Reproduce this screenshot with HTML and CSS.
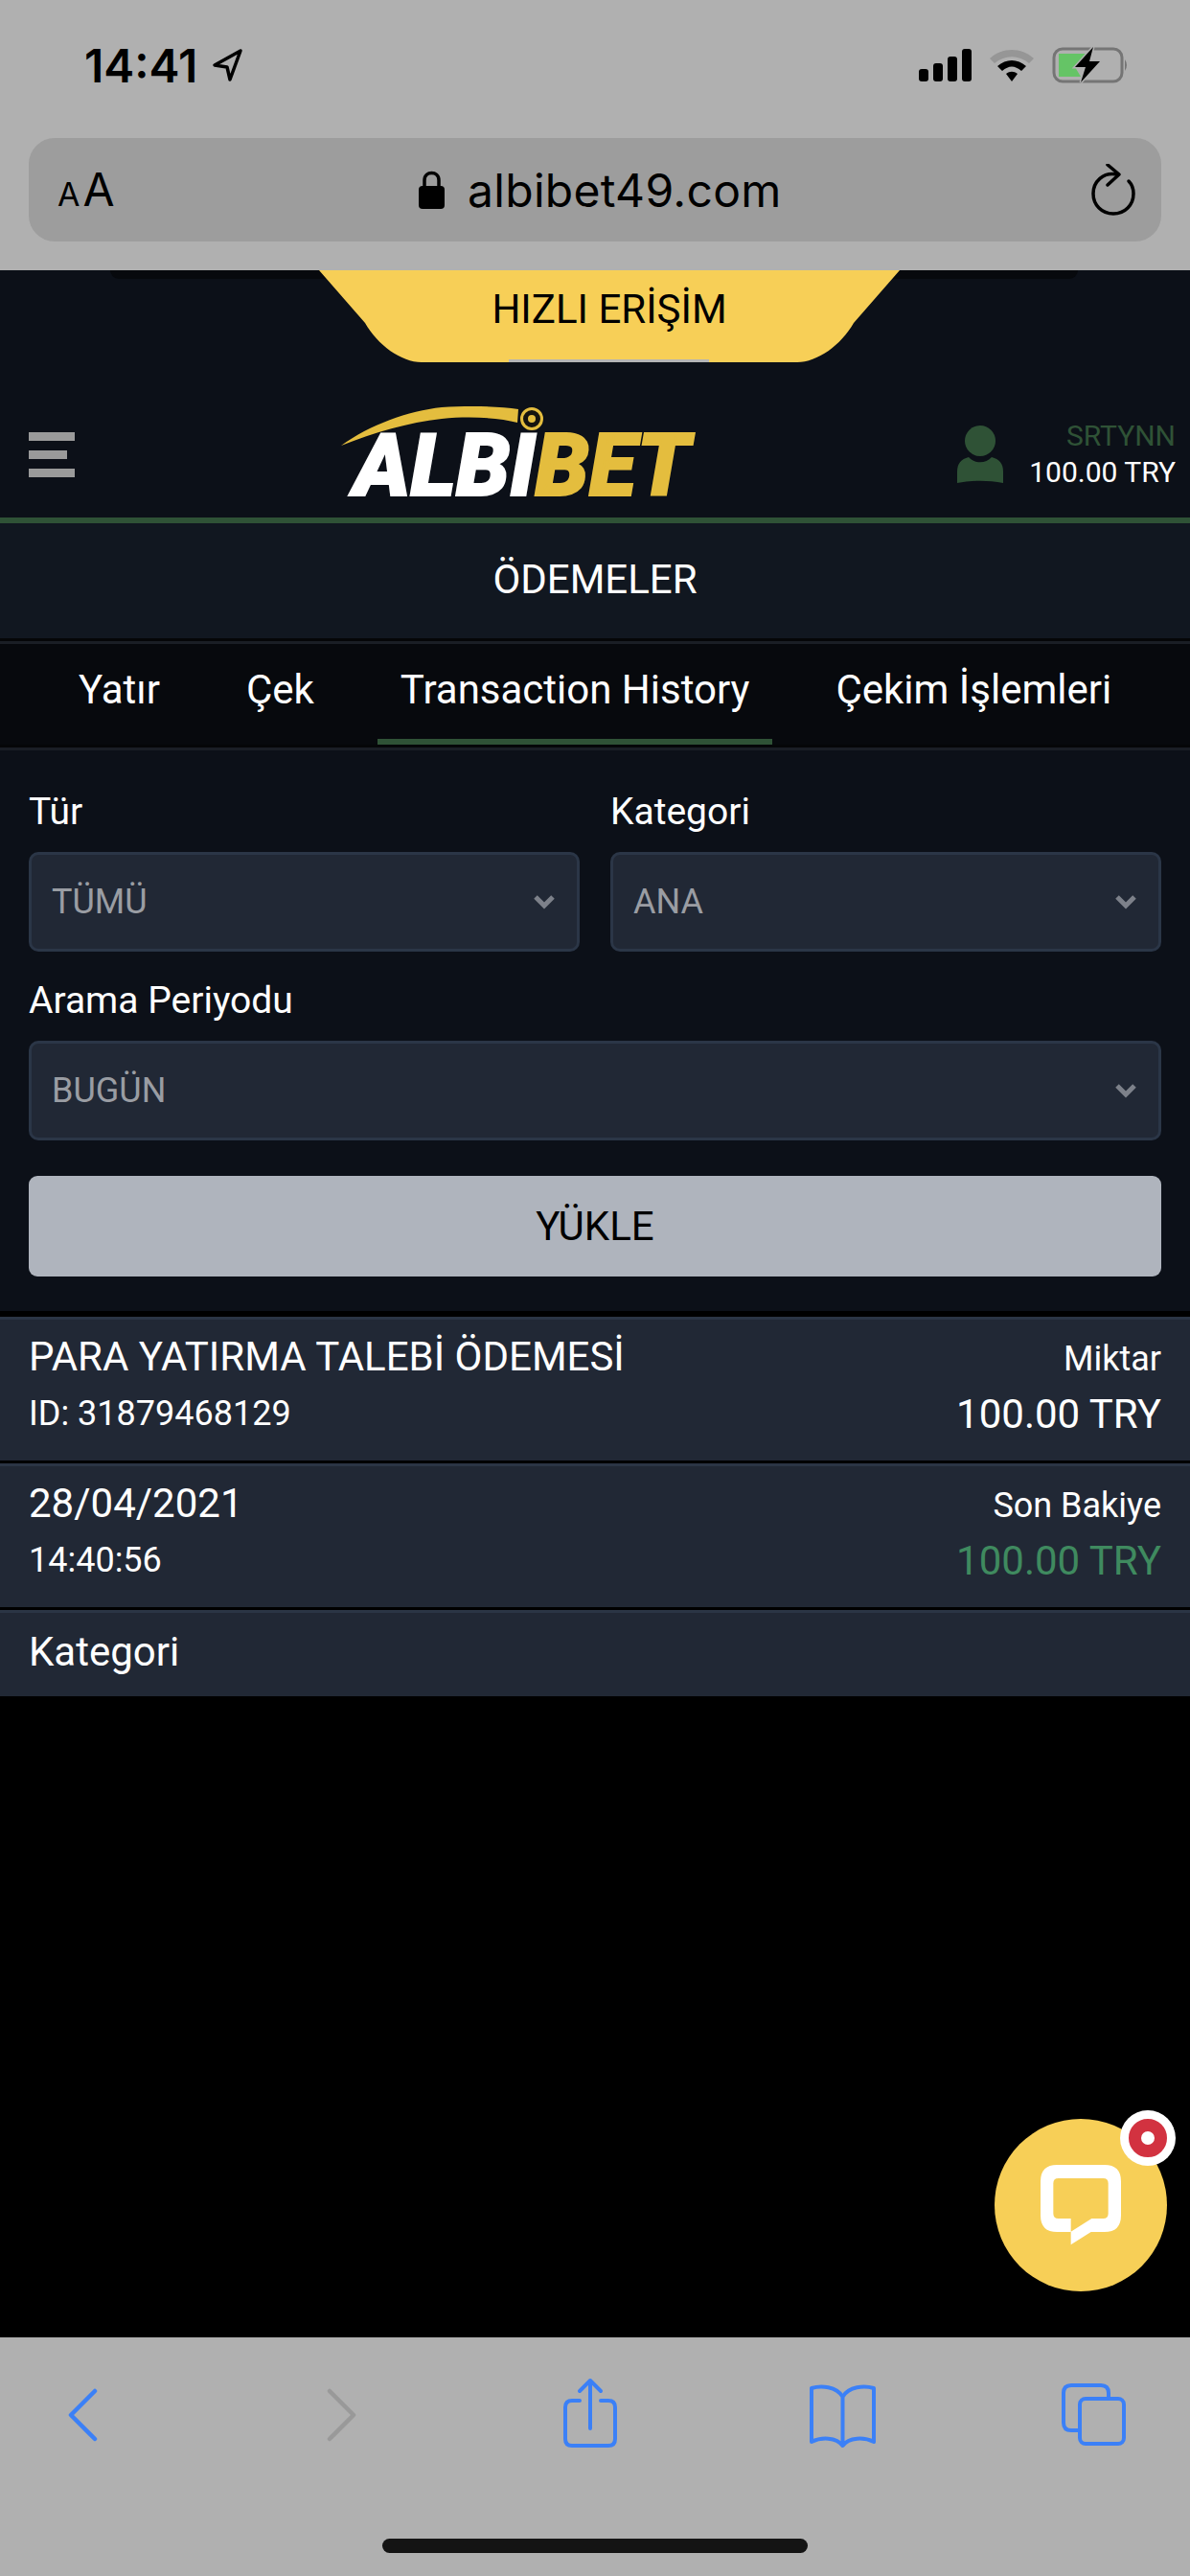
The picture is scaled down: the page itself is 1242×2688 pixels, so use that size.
FILE: index.html
```html
<!DOCTYPE html>
<html lang="tr">
  <head>
    <meta charset="UTF-8" />
    <meta name="viewport" content="width=device-width, initial-scale=1.0" />
    <title>Albibet - Ödemeler</title>
    <link rel="stylesheet" href="styles.css">
  </head>
  <body>
    <div class="browser-top">
      <div class="status-bar">
        <div class="status-time">
          <span>14:41</span>
          <svg class="location-icon" width="34" height="36" viewBox="0 0 34 36">
            <path d="M30 3 L3 18 L16 20 L19 33 Z" fill="none" stroke="#000" stroke-width="3.5" stroke-linejoin="round" />
          </svg>
        </div>
        <div class="status-icons">
          <svg width="55" height="36" viewBox="0 0 55 36">
            <rect x="0" y="22" width="10" height="13" rx="3" />
            <rect x="15" y="16" width="10" height="19" rx="3" />
            <rect x="30" y="9" width="10" height="26" rx="3" />
            <rect x="45" y="1" width="10" height="34" rx="3" />
          </svg>
          <svg width="48" height="36" viewBox="0 0 48 36">
            <path d="M1 11 C14 -1 34 -1 47 11 L42 16 C31 7 17 7 6 16 Z" fill="#969696" />
            <path d="M9 19 C18 11 30 11 39 19 L34 24 C27 18 21 18 14 24 Z" />
            <path d="M18 27 C22 24 26 24 30 27 L24 35 Z" />
          </svg>
          <svg width="80" height="40" viewBox="0 0 80 40">
            <rect x="2" y="3" width="71" height="34" rx="9" fill="none" stroke="#757575" stroke-width="3" />
            <path d="M76 14 Q80 20 76 26 Z" fill="#757575" />
            <path d="M7 8 H38 L24 22 L30 32 H7 Z" fill="#65c466" />
            <path d="M43 1 L24 22 H35 L30 38 L50 16 H39 Z" stroke="#b0b0b0" stroke-width="3" paint-order="stroke" />
          </svg>
        </div>
      </div>
      <div class="url-bar">
        <div class="text-size"><span class="small-a">A</span><span>A</span></div>
        <div class="url">
          <svg width="27" height="40" viewBox="0 0 27 40">
            <path d="M6 17 V10 C6 0 21 0 21 10 V17" fill="none" stroke="#000" stroke-width="3.5" />
            <rect x="0" y="16" width="27" height="24" rx="4" />
          </svg>
          <span>albibet49.com</span>
        </div>
        <svg width="46" height="54" viewBox="0 0 46 54">
          <path d="M27 11 C12 8 2 19 2 31 C2 43 11 52 23 52 C35 52 44 43 44 31 C44 25 42 21 39 18" fill="none" stroke="#000" stroke-width="3.5" stroke-linecap="round" />
          <path d="M17 1 L29 11 L17 22" fill="none" stroke="#000" stroke-width="3.5" stroke-linecap="round" stroke-linejoin="round" />
        </svg>
      </div>
    </div>

    <div class="site">
      <header class="site-header">
        <div class="quick-access">
          <div class="quick-shadow"></div>
          <div class="quick-tab">HIZLI ERİŞİM</div>
        </div>
        <div class="header-row">
          <div class="hamburger">
            <span></span>
            <span class="short"></span>
            <span></span>
          </div>
          <div class="logo">
            <svg class="logo-swoosh" width="215" height="30" viewBox="0 0 215 30">
              <path d="M0 42 C30 20 70 6 105 2 C135 0 165 1 185 4 L184 18 C165 13 135 11 105 14 C70 18 35 28 0 42 Z" fill="#e4bd3e" />
              <circle cx="199" cy="14" r="10.5" fill="#15130f" stroke="#e4bd3e" stroke-width="3" />
              <circle cx="199" cy="14" r="4" fill="#e4bd3e" />
            </svg>
            <div class="logo-text">ALBI<span class="logo-bet">BET</span></div>
          </div>
          <div class="user-box">
            <svg width="48" height="60" viewBox="0 0 48 60">
              <ellipse cx="24" cy="16" rx="16" ry="16" fill="#2f5236" />
              <path d="M0 60 V48 C0 40 4 35 12 33 C18 40 30 40 36 33 C44 35 48 40 48 48 V60 C32 57 16 57 0 60 Z" fill="#2f5236" />
            </svg>
            <div class="user-info">
              <div class="user-name">SRTYNN</div>
              <div class="user-balance">100.00 TRY</div>
            </div>
          </div>
        </div>
      </header>

      <div class="page-title">ÖDEMELER</div>

      <nav class="tabs">
        <a class="tab">Yatır</a>
        <a class="tab">Çek</a>
        <a class="tab active">Transaction History</a>
        <a class="tab">Çekim İşlemleri</a>
      </nav>

      <section class="filters">
        <div class="filter-row">
          <div class="field">
            <label>Tür</label>
            <div class="select">
              <span>TÜMÜ</span>
              <svg class="chevron" width="24" height="16" viewBox="0 0 24 16"><path d="M3 3 L12 12 L21 3" /></svg>
            </div>
          </div>
          <div class="field">
            <label>Kategori</label>
            <div class="select">
              <span>ANA</span>
              <svg class="chevron" width="24" height="16" viewBox="0 0 24 16"><path d="M3 3 L12 12 L21 3" /></svg>
            </div>
          </div>
        </div>
        <div class="field">
          <label>Arama Periyodu</label>
          <div class="select">
            <span>BUGÜN</span>
            <svg class="chevron" width="24" height="16" viewBox="0 0 24 16"><path d="M3 3 L12 12 L21 3" /></svg>
          </div>
        </div>
        <button class="load-button">YÜKLE</button>
      </section>

      <section class="history">
        <div class="history-row">
          <div>
            <div class="row-title">PARA YATIRMA TALEBİ ÖDEMESİ</div>
            <div class="row-sub">ID: 31879468129</div>
          </div>
          <div class="row-right">
            <div class="row-label">Miktar</div>
            <div class="row-amount">100.00 TRY</div>
          </div>
        </div>
        <div class="history-row">
          <div>
            <div class="row-title">28/04/2021</div>
            <div class="row-sub">14:40:56</div>
          </div>
          <div class="row-right">
            <div class="row-label">Son Bakiye</div>
            <div class="row-amount green">100.00 TRY</div>
          </div>
        </div>
        <div class="history-row last">
          <div class="row-title">Kategori</div>
        </div>
      </section>
    </div>

    <div class="browser-bottom">
      <div class="toolbar">
        <svg class="tool" width="100" height="80" viewBox="0 0 100 80">
          <path d="M63 15 L38 40 L63 65" stroke-width="4.5" />
        </svg>
        <svg class="tool disabled" width="100" height="80" viewBox="0 0 100 80">
          <path d="M44 15 L69 40 L44 65" stroke-width="4.5" />
        </svg>
        <svg class="tool" width="100" height="80" viewBox="0 0 100 80">
          <path d="M41 25 H33 Q26 25 26 32 V65 Q26 72 33 72 H71 Q78 72 78 65 V32 Q78 25 71 25 H63" />
          <path d="M52 54 V4 M41 15 L52 4 L63 15" />
        </svg>
        <svg class="tool" width="100" height="80" viewBox="0 0 100 80">
          <path d="M52.5 21 C46 10 30 9 20 12 V68 C30 63 46 63 52.5 72 C59 63 75 63 85 68 V12 C75 9 59 10 52.5 21 Z M52.5 21 V72" />
        </svg>
        <svg class="tool" width="100" height="80" viewBox="0 0 100 80">
          <rect x="36" y="23" width="46" height="47" rx="6" />
          <path d="M34 56 H27 Q19 56 19 48 V17 Q19 9 27 9 H58 Q66 9 66 17 V23" />
        </svg>
      </div>
      <div class="home-indicator"></div>
    </div>

    <div class="chat-button">
      <svg width="84" height="84" viewBox="198 246 252 252">
        <path fill-rule="evenodd" fill="#fff" d="M250 246 H398 Q450 246 450 298 V404 Q450 456 398 456 H356 L293 496 V456 H250 Q198 456 198 404 V298 Q198 246 250 246 Z M254 288 Q238 288 238 304 V398 Q238 414 254 414 H293 V455 L358 414 H394 Q410 414 410 398 V304 Q410 288 394 288 Z" />
      </svg>
      <div class="chat-badge"><span></span></div>
    </div>
  </body>
</html>
```

FILE: styles.css
```css
* {
  box-sizing: border-box;
}
html,
body {
  margin: 0;
  padding: 0;
}
body {
  width: 1242px;
  height: 2688px;
  position: relative;
  display: flex;
  flex-direction: column;
  overflow: hidden;
  font-family: Roboto, Arial, sans-serif;
  background-color: #000;
  color: #fff;
}

/* safari top */
.browser-top {
  height: 282px;
  padding: 0 30px;
  background-color: #b0b0b0;
  color: #000;
  font-family: Inter, Arial, sans-serif;
}
.status-bar {
  height: 144px;
  padding: 0 34px 8px 58px;
  display: flex;
  justify-content: space-between;
  align-items: center;
}
.status-time {
  display: flex;
  align-items: center;
  gap: 15px;
  font-size: 48px;
  font-weight: 600;
}
.status-icons {
  display: flex;
  align-items: center;
  gap: 18px;
}
.url-bar {
  height: 108px;
  padding: 0 27px 0 30px;
  display: flex;
  justify-content: space-between;
  align-items: center;
  background-color: #9d9d9d;
  border-radius: 27px;
}
.text-size {
  font-size: 48px;
  line-height: 1;
}
.small-a {
  font-size: 34px;
  margin-right: 3px;
}
.url {
  display: flex;
  align-items: center;
  gap: 24px;
  margin-right: 6px;
  font-size: 48px;
  letter-spacing: 0.3px;
}

/* site header */
.site {
  flex: 1;
  display: flex;
  flex-direction: column;
}
.site-header {
  height: 264px;
  background-color: #0c1018;
  border-bottom: 6px solid #2f5236;
}
.quick-access {
  position: relative;
  height: 96px;
  display: flex;
  justify-content: center;
  padding-left: 30px;
}
.quick-shadow {
  position: absolute;
  top: 0;
  left: 115px;
  width: 1010px;
  height: 9px;
  background-color: #07090d;
  border-radius: 0 0 18px 18px;
}
.quick-tab {
  position: relative;
  width: 606px;
  height: 96px;
  padding-top: 18px;
  text-align: center;
  font-size: 42px;
  line-height: 46px;
  color: #000;
  background-color: #f7cf57;
  clip-path: path("M0 0 H606 L558 55 C545 78 520 96 499 96 H107 C86 96 61 78 48 55 Z");
}
.quick-tab::after {
  content: "";
  position: absolute;
  left: 198px;
  bottom: 0;
  width: 209px;
  height: 3px;
  background-color: #b5b5b5;
}
.header-row {
  height: 162px;
  padding: 30px 15px 0 30px;
  display: flex;
  justify-content: space-between;
  align-items: center;
}
.hamburger {
  width: 48px;
  display: flex;
  flex-direction: column;
  gap: 10px;
}
.hamburger span {
  height: 9px;
  background-color: #9a9a9a;
}
.hamburger .short {
  width: 40px;
}
.logo {
  position: relative;
  width: 365px;
  height: 96px;
  display: flex;
  align-items: flex-end;
  padding-left: 13px;
}
.logo-swoosh {
  position: absolute;
  top: -3px;
  left: 0;
  overflow: visible;
}
.logo-text {
  font-size: 90px;
  font-weight: 900;
  font-style: italic;
  line-height: 70px;
  letter-spacing: 0;
  -webkit-text-stroke: 2px;
  color: #fff;
  white-space: nowrap;
}
.logo-bet {
  color: #e4bd3e;
}
.user-box {
  display: flex;
  align-items: center;
  gap: 27px;
}
.user-info {
  text-align: right;
  font-size: 30px;
  line-height: 38px;
}
.user-name {
  color: #2f5236;
}

/* title + tabs */
.page-title {
  height: 120px;
  padding-bottom: 2px;
  display: flex;
  align-items: center;
  justify-content: center;
  background-color: #111720;
  font-size: 42px;
  line-height: 50px;
}
.tabs {
  height: 111px;
  padding: 0 36px;
  display: flex;
  align-items: stretch;
  background-color: #07090d;
  border-top: 3px solid #050608;
  box-shadow: inset 0 3px 0 #1a1e25;
}
.tab {
  margin: 0 21px;
  padding: 12px 24px 0;
  font-size: 42px;
  line-height: 78px;
  white-space: nowrap;
}
.tab:first-child {
  margin-left: 22px;
}
.tab.active {
  border-bottom: 6px solid #2f5236;
}

/* filters */
.filters {
  height: 591px;
  padding: 42px 30px 0;
  background-color: #0c1018;
  border-top: 3px solid #050608;
  box-shadow: inset 0 3px 0 #1a1e25;
}
.filter-row {
  display: flex;
  gap: 32px;
}
.filter-row .field {
  flex: 1;
}
.field {
  margin-bottom: 26px;
}
label {
  display: block;
  height: 67px;
  font-size: 39px;
  line-height: 50px;
}
.select {
  height: 104px;
  padding: 0 22px 0 21px;
  display: flex;
  justify-content: space-between;
  align-items: center;
  background-color: #212835;
  border: 3px solid #2b3647;
  border-radius: 10px;
  font-size: 36px;
  color: #9a9da3;
}
.chevron path {
  fill: none;
  stroke: #7d818a;
  stroke-width: 5;
}
.load-button {
  display: block;
  width: 100%;
  height: 105px;
  margin-top: 37px;
  background-color: #afb4bd;
  color: #000;
  border: none;
  border-radius: 9px;
  font-family: inherit;
  font-size: 42px;
}

/* history */
.history {
  padding-top: 6px;
  display: flex;
  flex-direction: column;
  gap: 3px;
}
.history-row {
  height: 150px;
  padding: 14px 30px 0;
  display: flex;
  justify-content: space-between;
  background-color: #212835;
  border-top: 3px solid #2b3545;
}
.history-row.last {
  height: 90px;
  padding-top: 0;
  padding-bottom: 6px;
  align-items: center;
}
.row-title {
  font-size: 42px;
  line-height: 50px;
}
.row-sub {
  margin-top: 10px;
  font-size: 36px;
  line-height: 48px;
}
.row-right {
  padding-top: 2px;
  text-align: right;
}
.row-label {
  font-size: 36px;
  line-height: 50px;
}
.row-amount {
  margin-top: 8px;
  font-size: 42px;
  line-height: 50px;
}
.row-amount.green {
  color: #3f8a5f;
}

/* safari bottom */
.browser-bottom {
  height: 249px;
  background-color: #b0b0b0;
}
.toolbar {
  padding: 41px 51px 0 36px;
  display: flex;
  justify-content: space-between;
}
.tool {
  fill: none;
  stroke: #3b80f7;
  stroke-width: 4;
  stroke-linecap: round;
  stroke-linejoin: round;
}
.tool.disabled {
  stroke: #999;
}
.home-indicator {
  width: 444px;
  height: 15px;
  margin: 89px auto 0;
  background-color: #141414;
  border-radius: 8px;
}

/* chat widget */
.chat-button {
  position: absolute;
  left: 1038px;
  top: 2211px;
  width: 180px;
  height: 180px;
  display: flex;
  align-items: center;
  justify-content: center;
  background-color: #f7cf57;
  border-radius: 50%;
}
.chat-badge {
  position: absolute;
  left: 131px;
  top: -9px;
  width: 58px;
  height: 58px;
  display: flex;
  align-items: center;
  justify-content: center;
  background-color: #fff;
  border-radius: 50%;
}
.chat-badge span {
  width: 40px;
  height: 40px;
  border: 13px solid #d23240;
  background-color: #fff;
  border-radius: 50%;
}
```
